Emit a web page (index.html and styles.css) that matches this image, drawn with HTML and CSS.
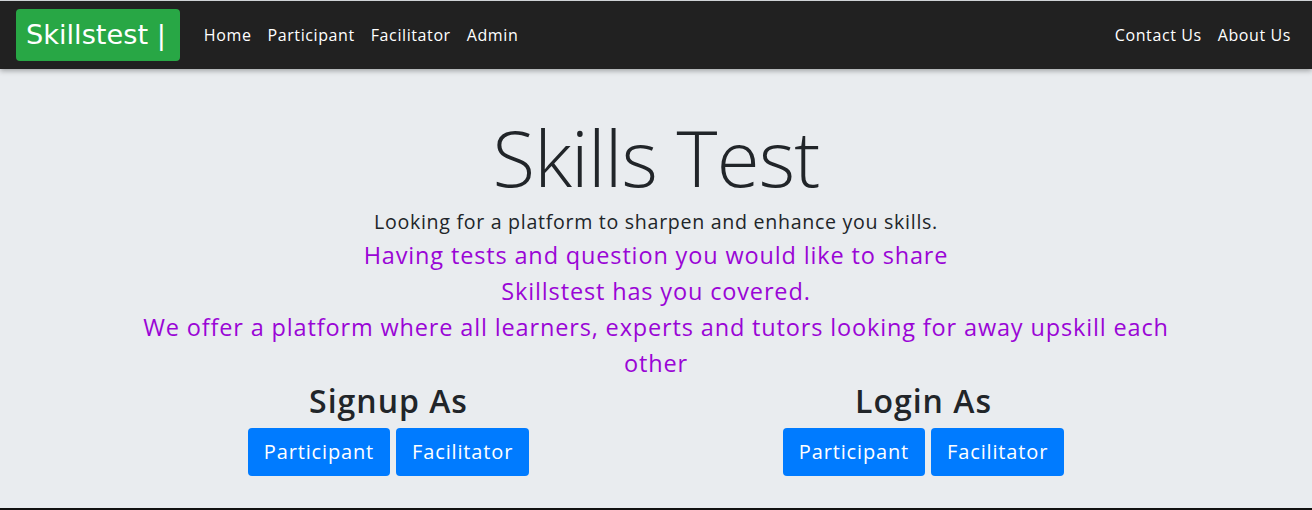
FILE: index.html
```html
<!DOCTYPE html>
<html lang="en">
<head>
<meta charset="utf-8">
<title>Skillstest</title>
<link rel="stylesheet" href="styles.css">
</head>
<body>
<nav class="navbar">
  <a class="brand" href="#">Skillstest |</a>
  <ul class="nav-links">
    <li><a href="#">Home</a></li>
    <li><a href="#">Participant</a></li>
    <li><a href="#">Facilitator</a></li>
    <li><a href="#">Admin</a></li>
  </ul>
  <ul class="nav-links nav-right">
    <li><a href="#">Contact Us</a></li>
    <li><a href="#">About Us</a></li>
  </ul>
</nav>
<main class="hero">
  <h1 class="title">Skills Test</h1>
  <p class="lead">Looking for a platform to sharpen and enhance you skills.</p>
  <p class="pitch">Having tests and question you would like to share<br>Skillstest has you covered.<br>We offer a platform where all learners, experts and tutors looking for away upskill each other</p>
  <div class="choices">
    <section class="choice">
      <h2>Signup As</h2>
      <div class="btns">
        <a class="btn" href="#">Participant</a>
        <a class="btn" href="#">Facilitator</a>
      </div>
    </section>
    <section class="choice">
      <h2>Login As</h2>
      <div class="btns">
        <a class="btn" href="#">Participant</a>
        <a class="btn" href="#">Facilitator</a>
      </div>
    </section>
  </div>
</main>
<footer class="footer">
  <span class="f-grey">Skillstest</span>
  <span class="f-green">Participant</span>
  <span class="f-blue">Facilitator</span>
</footer>
</body>
</html>
```
FILE: styles.css
```css
* { box-sizing: border-box; }
html, body { margin: 0; padding: 0; }
body {
  font-family: "Open Sans", sans-serif;
  background: #e9ecef;
  color: #212529;
  border-top: 1px solid #cfd3d6;
}
a { text-decoration: none; }

.navbar {
  display: flex;
  align-items: center;
  height: 68px;
  padding: 0 13px 0 16px;
  background: #212121;
  box-shadow: 0 2px 5px rgba(0,0,0,0.3);
  position: relative;
  z-index: 1;
}
.brand {
  font-family: "DejaVu Sans", sans-serif;
  font-size: 27.2px;
  line-height: 36px;
  color: #fff;
  background: #28a745;
  border-radius: 4px;
  padding: 8px 14px 8px 10px;
  margin-right: 16px;
}
.nav-links {
  display: flex;
  list-style: none;
  margin: 0;
  padding: 0;
}
.nav-links a {
  display: block;
  color: #fff;
  font-size: 16px;
  letter-spacing: 0.6px;
  padding: 8px 8px;
}
.nav-right { margin-left: auto; }

.hero {
  text-align: center;
  padding: 40px 0 32px;
}
.title {
  font-size: 78px;
  font-weight: 300;
  letter-spacing: -0.8px;
  line-height: 96px;
  margin: 0;
}
.lead {
  font-size: 19.6px;
  letter-spacing: 0.7px;
  line-height: 30px;
  margin: 2px 0 0;
}
.pitch {
  color: #9a05d6;
  font-size: 23.5px;
  letter-spacing: 0.85px;
  line-height: 36px;
  max-width: 1070px;
  margin: 0 auto;
}
.choices {
  display: flex;
  max-width: 1070px;
  margin: 0 auto;
}
.choice { flex: 1; }
.choice h2 {
  font-size: 32px;
  font-weight: 600;
  letter-spacing: 1px;
  line-height: 40px;
  margin: 0 0 7px;
}
.btns {
  display: flex;
  justify-content: center;
  gap: 6px;
}
.btn {
  display: block;
  background: #007bff;
  color: #fff;
  font-size: 20px;
  letter-spacing: 0.85px;
  line-height: 30px;
  padding: 9px 16px;
  border-radius: 4px;
}

.footer {
  background: #111;
  padding: 24px 20px;
  display: flex;
  gap: 150px;
  font-size: 14px;
  line-height: 16px;
}
.f-grey { color: #777; }
.f-green { color: #1e8a5a; }
.f-blue { color: #2a5fa8; }
```
